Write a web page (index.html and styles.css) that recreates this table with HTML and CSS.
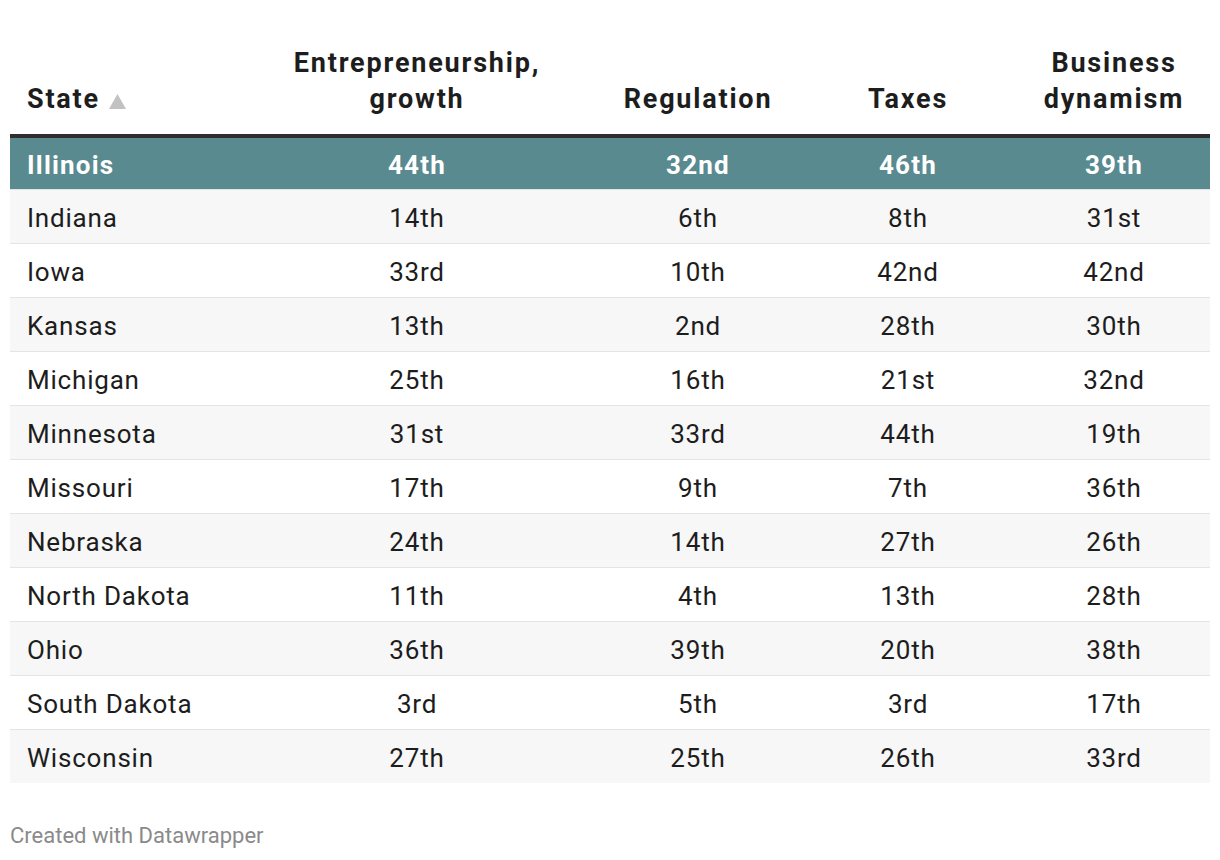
FILE: index.html
```html
<!DOCTYPE html>
<html>
<head>
<meta charset="utf-8">
<link rel="stylesheet" href="styles.css">
</head>
<body>
<div class="chart">
  <table class="dw-table">
    <colgroup>
      <col class="c1"><col class="c2"><col class="c3"><col class="c4"><col class="c5">
    </colgroup>
    <thead>
      <tr>
        <th class="left">State<svg class="sort" width="17" height="15" viewBox="0 0 17 15"><polygon points="8.5,0 17,15 0,15" fill="#c2c2c2"/></svg></th>
        <th>Entrepreneurship,<br>growth</th>
        <th>Regulation</th>
        <th>Taxes</th>
        <th>Business<br>dynamism</th>
      </tr>
    </thead>
    <tbody>
      <tr class="hl"><td class="left">Illinois</td><td>44th</td><td>32nd</td><td>46th</td><td>39th</td></tr>
      <tr class="odd"><td class="left">Indiana</td><td>14th</td><td>6th</td><td>8th</td><td>31st</td></tr>
      <tr><td class="left">Iowa</td><td>33rd</td><td>10th</td><td>42nd</td><td>42nd</td></tr>
      <tr class="odd"><td class="left">Kansas</td><td>13th</td><td>2nd</td><td>28th</td><td>30th</td></tr>
      <tr><td class="left">Michigan</td><td>25th</td><td>16th</td><td>21st</td><td>32nd</td></tr>
      <tr class="odd"><td class="left">Minnesota</td><td>31st</td><td>33rd</td><td>44th</td><td>19th</td></tr>
      <tr><td class="left">Missouri</td><td>17th</td><td>9th</td><td>7th</td><td>36th</td></tr>
      <tr class="odd"><td class="left">Nebraska</td><td>24th</td><td>14th</td><td>27th</td><td>26th</td></tr>
      <tr><td class="left">North Dakota</td><td>11th</td><td>4th</td><td>13th</td><td>28th</td></tr>
      <tr class="odd"><td class="left">Ohio</td><td>36th</td><td>39th</td><td>20th</td><td>38th</td></tr>
      <tr><td class="left">South Dakota</td><td>3rd</td><td>5th</td><td>3rd</td><td>17th</td></tr>
      <tr class="odd last"><td class="left">Wisconsin</td><td>27th</td><td>25th</td><td>26th</td><td>33rd</td></tr>
    </tbody>
  </table>
  <div class="footer">Created with Datawrapper</div>
</div>
</body>
</html>
```

FILE: styles.css
```css
html, body {
  margin: 0;
  padding: 0;
  background: #ffffff;
}
body {
  font-family: Roboto, "Liberation Sans", Arial, sans-serif;
  color: #1d1d1d;
}
.chart {
  padding: 45px 10px 0 10px;
}
.dw-table {
  width: 1200px;
  border-collapse: collapse;
  table-layout: fixed;
}
.c1 { width: 226px; }
.c2 { width: 362px; }
.c3 { width: 200px; }
.c4 { width: 220px; }
.c5 { width: 192px; }

.dw-table th {
  font-size: 27px;
  font-weight: 700;
  letter-spacing: 1.8px;
  line-height: 36px;
  text-align: center;
  vertical-align: bottom;
  padding: 0 0 17px 0;
  border-bottom: 4px solid #2e2e2e;
  color: #1d1d1d;
}
.dw-table th.left,
.dw-table td.left {
  text-align: left;
  padding-left: 17px;
}
.sort {
  margin-left: 9px;
  vertical-align: -1px;
}
.dw-table td {
  font-size: 26px;
  letter-spacing: 0.8px;
  line-height: 49px;
  padding: 4px 0 0 0;
  text-align: center;
  border-bottom: 1px solid #e4e4e4;
}
.dw-table tr.odd td {
  background: #f7f7f7;
}
.dw-table tr.last td {
  border-bottom: none;
}
.dw-table tr.hl td {
  background: #598a90;
  color: #ffffff;
  font-weight: 700;
  letter-spacing: 1.2px;
  line-height: 47px;
  border-bottom: 1px solid #e4e4e4;
}
.footer {
  margin-top: 40px;
  font-size: 22px;
  color: #8a8a8a;
}
```
